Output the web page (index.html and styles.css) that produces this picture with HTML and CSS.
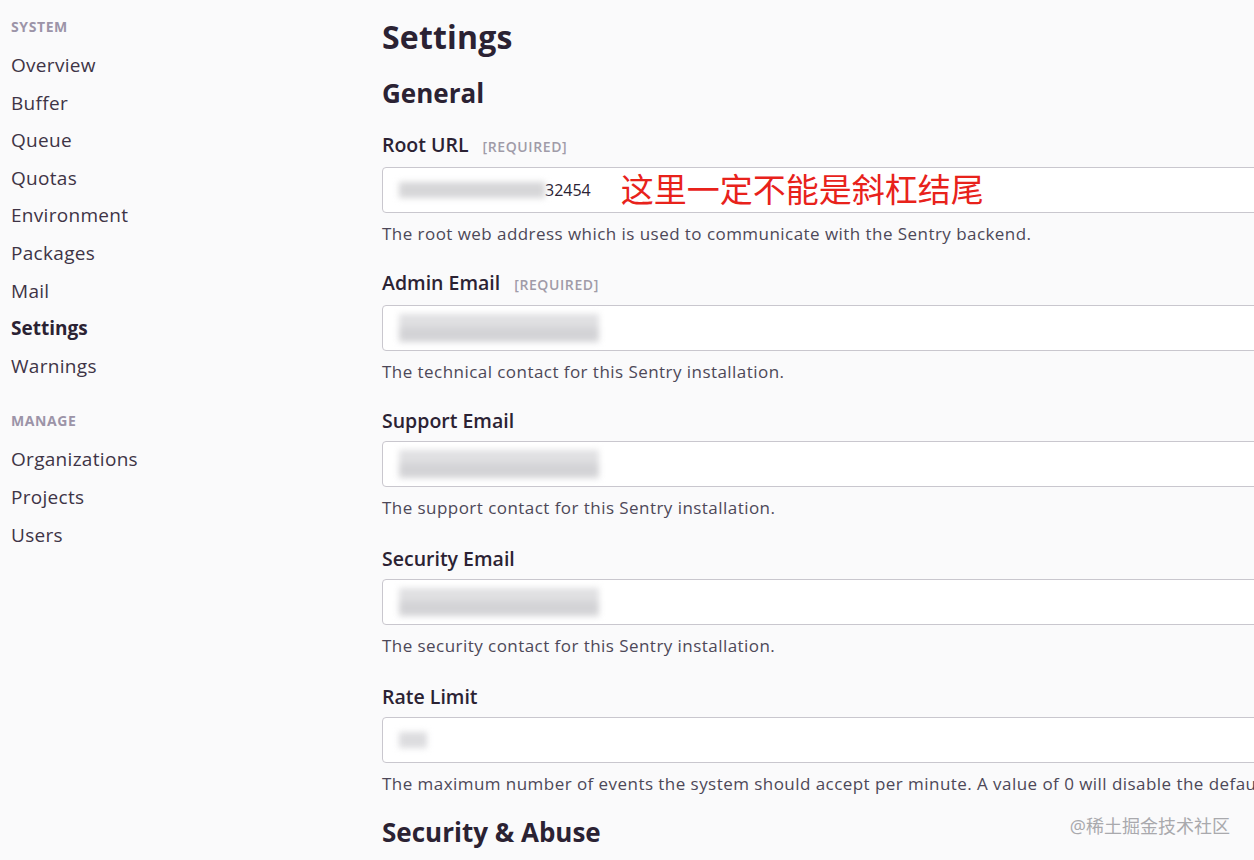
FILE: index.html
```html
<!DOCTYPE html>
<html lang="en">
<head>
<meta charset="utf-8">
<title>Settings</title>
<link rel="stylesheet" href="styles.css">
</head>
<body>
<div class="layout">
  <aside class="sidebar">
    <div class="nav-section">
      <div class="nav-heading">System</div>
      <a class="nav-item">Overview</a>
      <a class="nav-item">Buffer</a>
      <a class="nav-item">Queue</a>
      <a class="nav-item">Quotas</a>
      <a class="nav-item">Environment</a>
      <a class="nav-item">Packages</a>
      <a class="nav-item">Mail</a>
      <a class="nav-item active">Settings</a>
      <a class="nav-item">Warnings</a>
    </div>
    <div class="nav-section">
      <div class="nav-heading">Manage</div>
      <a class="nav-item">Organizations</a>
      <a class="nav-item">Projects</a>
      <a class="nav-item">Users</a>
    </div>
  </aside>
  <main class="content">
    <h1 class="page-title">Settings</h1>
    <h2 class="section-title">General</h2>

    <div class="field">
      <label class="field-label">Root URL <span class="required">[REQUIRED]</span></label>
      <div class="input">
        <span class="blur blur-url"></span><span class="value">32454</span>
        <span class="note">这里一定不能是斜杠结尾</span>
      </div>
      <p class="help">The root web address which is used to communicate with the Sentry backend.</p>
    </div>

    <div class="field">
      <label class="field-label">Admin Email <span class="required">[REQUIRED]</span></label>
      <div class="input"><span class="blur blur-email"></span></div>
      <p class="help">The technical contact for this Sentry installation.</p>
    </div>

    <div class="field">
      <label class="field-label">Support Email</label>
      <div class="input"><span class="blur blur-email"></span></div>
      <p class="help">The support contact for this Sentry installation.</p>
    </div>

    <div class="field">
      <label class="field-label">Security Email</label>
      <div class="input"><span class="blur blur-email"></span></div>
      <p class="help">The security contact for this Sentry installation.</p>
    </div>

    <div class="field last">
      <label class="field-label">Rate Limit</label>
      <div class="input"><span class="blur blur-num"></span></div>
      <p class="help">The maximum number of events the system should accept per minute. A value of 0 will disable the default rate limit.</p>
    </div>

    <h2 class="section-title">Security &amp; Abuse</h2>
  </main>
</div>
<div class="watermark">@稀土掘金技术社区</div>
</body>
</html>
```

FILE: styles.css
```css
html, body {
  margin: 0;
  padding: 0;
  background: #fafafb;
  overflow: hidden;
  height: 860px;
}

body {
  font-family: "Open Sans", "Noto Sans CJK SC", sans-serif;
  color: #2b2233;
}

.layout {
  display: flex;
  width: 1600px;
}

.sidebar {
  width: 382px;
  box-sizing: border-box;
  padding: 19px 0 0 11px;
  flex-shrink: 0;
}

.nav-section {
  display: flex;
  flex-direction: column;
  margin-bottom: 28px;
}

.nav-heading {
  font-size: 14px;
  font-weight: 700;
  text-transform: uppercase;
  color: #9c94a8;
  line-height: 16px;
  margin-bottom: 12px;
  letter-spacing: 0.6px;
}

.nav-item {
  font-size: 19px;
  line-height: 37.6px;
  color: #3e3446;
  letter-spacing: 0.3px;
}

.nav-item.active {
  font-weight: 700;
  color: #2b2233;
  letter-spacing: 0;
}

.content {
  flex: 1;
  padding-top: 18px;
}

.page-title {
  margin: 0;
  font-size: 32px;
  font-weight: 700;
  line-height: 38px;
  color: #2b2233;
  letter-spacing: 0.2px;
}

.section-title {
  margin: 20px 0 23px;
  font-size: 26px;
  font-weight: 700;
  line-height: 34px;
  color: #2b2233;
}

.field {
  height: 138px;
}

.field.last {
  height: 110px;
}

.field-label {
  display: flex;
  align-items: baseline;
  gap: 14px;
  font-size: 19.5px;
  font-weight: 600;
  line-height: 24px;
  color: #2b2233;
}

.required {
  font-size: 14px;
  font-weight: 600;
  color: #a09ba8;
  letter-spacing: 0.6px;
}

.input {
  position: relative;
  display: flex;
  align-items: center;
  margin-top: 8px;
  height: 46px;
  box-sizing: border-box;
  border: 1px solid #c9c7ce;
  border-radius: 4px;
  background: #fff;
  padding-left: 16px;
}

.blur {
  display: block;
  height: 16px;
  background: #d6d6d8;
  filter: blur(3px);
}

.blur-url {
  width: 146px;
}

.blur-email {
  width: 200px;
  height: 28px;
  background: linear-gradient(180deg, #e0e0e2 0 45%, #d3d3d6 45% 100%);
}

.blur-num {
  width: 28px;
  background: #dcdcdf;
}

.value {
  font-size: 16px;
  color: #2b2233;
}

.note {
  margin-left: 30px;
  font-size: 33px;
  color: #e8221b;
  line-height: 40px;
}

.help {
  margin: 10px 0 0;
  font-size: 17px;
  line-height: 22px;
  color: #4d4858;
  letter-spacing: 0.45px;
  white-space: nowrap;
}

.watermark {
  position: absolute;
  right: 24px;
  bottom: 22px;
  font-size: 18px;
  color: #a9a9ad;
}
```
